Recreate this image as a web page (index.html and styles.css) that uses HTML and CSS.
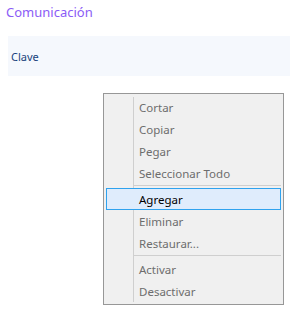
FILE: index.html
```html
<!DOCTYPE html>
<html lang="es">

<head>
  <meta charset="UTF-8" />
  <meta name="viewport" content="width=device-width, initial-scale=1.0" />
  <title>Comunicación</title>
  <link rel="stylesheet" href="styles.css">
</head>

<body>
  <div class="page">
    <h3 class="section-title">Comunicación</h3>
    <div class="field-row">
      <span class="field-label">Clave</span>
    </div>
  </div>

  <!-- menu contextual -->
  <ul class="context-menu">
    <li class="menu-item">Cortar</li>
    <li class="menu-item">Copiar</li>
    <li class="menu-item">Pegar</li>
    <li class="menu-item">Seleccionar Todo</li>
    <li class="menu-sep"></li>
    <li class="menu-item active">Agregar</li>
    <li class="menu-item">Eliminar</li>
    <li class="menu-item">Restaurar...</li>
    <li class="menu-sep"></li>
    <li class="menu-item">Activar</li>
    <li class="menu-item">Desactivar</li>
  </ul>
</body>

</html>
```

FILE: styles.css
```css
body {
  font-family: "Noto Sans", "Open Sans", sans-serif;
  background-color: #fff;
  margin: 0;
  padding: 0;
}

.page {
  padding: 3px 0 0 6px;
}

.section-title {
  margin: 0;
  font-size: 13px;
  font-weight: normal;
  line-height: 19px;
  color: #8b5cf6;
}

.field-row {
  margin: 14px 0 0 2px;
  height: 40px;
  display: flex;
  align-items: center;
  padding-left: 3px;
  background-color: #f5f8fd;
}

.field-label {
  font-size: 11px;
  color: #17427c;
}

.context-menu {
  position: absolute;
  left: 103px;
  top: 93px;
  width: 179px;
  margin: 0;
  padding: 2px 0;
  list-style: none;
  background-color: #f0f0f0;
  border: 1px solid #979797;
  font-size: 11.5px;
  color: #6d6d6d;
}

/* columna de iconos */
.context-menu::before {
  content: "";
  position: absolute;
  left: 29px;
  top: 3px;
  bottom: 2px;
  width: 1px;
  background-color: #cfcfcf;
}

.menu-item {
  position: relative;
  height: 22px;
  line-height: 22px;
  margin: 0 2px;
  padding-left: 32px;
  border: 1px solid transparent;
  box-sizing: border-box;
}

.menu-item.active {
  background-color: #dfecfc;
  border-color: #2fa2ee;
  color: #000;
}

.menu-sep {
  height: 4px;
  margin-left: 30px;
  margin-right: 2px;
  position: relative;
}

.menu-sep::after {
  content: "";
  position: absolute;
  left: 0;
  right: 0;
  top: 1px;
  height: 1px;
  background-color: #cfcfcf;
}
```
